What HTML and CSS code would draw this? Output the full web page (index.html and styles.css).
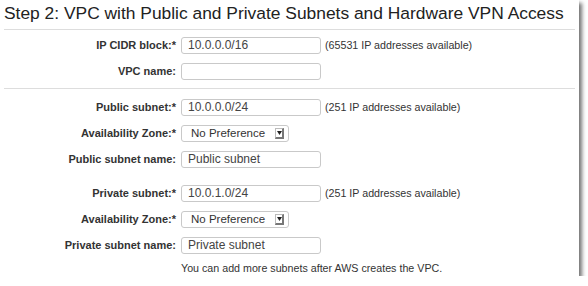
FILE: index.html
```html
<!DOCTYPE html>
<html lang="en">
<head>
    <meta charset="UTF-8">
    <title>Step 2: VPC with Public and Private Subnets and Hardware VPN Access</title>
    <link rel="stylesheet" href="styles.css">
</head>
<body>
    <div class="panel">
        <h1>Step 2: VPC with Public and Private Subnets and Hardware VPN Access</h1>

        <div class="section">
            <div class="row">
                <label>IP CIDR block:*</label>
                <div class="input">10.0.0.0/16</div>
                <span class="hint">(65531 IP addresses available)</span>
            </div>
            <div class="row">
                <label>VPC name:</label>
                <div class="input"></div>
            </div>
        </div>

        <div class="section">
            <div class="row">
                <label>Public subnet:*</label>
                <div class="input">10.0.0.0/24</div>
                <span class="hint">(251 IP addresses available)</span>
            </div>
            <div class="row">
                <label>Availability Zone:*</label>
                <div class="select">
                    <span>No Preference</span>
                    <span class="arrow"><svg width="5" height="4" viewBox="0 0 5 4"><path d="M0 0H5L2.5 4Z" fill="#222"/></svg></span>
                </div>
            </div>
            <div class="row">
                <label>Public subnet name:</label>
                <div class="input">Public subnet</div>
            </div>

            <div class="row spaced">
                <label>Private subnet:*</label>
                <div class="input">10.0.1.0/24</div>
                <span class="hint">(251 IP addresses available)</span>
            </div>
            <div class="row">
                <label>Availability Zone:*</label>
                <div class="select">
                    <span>No Preference</span>
                    <span class="arrow"><svg width="5" height="4" viewBox="0 0 5 4"><path d="M0 0H5L2.5 4Z" fill="#222"/></svg></span>
                </div>
            </div>
            <div class="row">
                <label>Private subnet name:</label>
                <div class="input">Private subnet</div>
            </div>
            <div class="note">You can add more subnets after AWS creates the VPC.</div>
        </div>
    </div>
</body>
</html>
```

FILE: styles.css
```css
body {
    margin: 0;
    background: #fff;
    font-family: "Liberation Sans", Arial, sans-serif;
    color: #333;
}
.panel {
    width: 579px;
    height: 276px;
    background: #fff;
    box-shadow: 3px 3px 4px rgba(0, 0, 0, 0.55);
    box-sizing: border-box;
    padding: 0 4px;
}
h1 {
    margin: 0;
    height: 29px;
    font-size: 17.4px;
    font-weight: normal;
    line-height: 27px;
    white-space: nowrap;
    color: #222;
    border-bottom: 1px solid #ddd;
}
.section {
    padding: 2px 0 4px;
    border-bottom: 1px solid #ddd;
}
.section:last-child {
    border-bottom: none;
    padding-top: 5px;
}
.row {
    display: flex;
    align-items: center;
    height: 26px;
}
.row.spaced {
    margin-top: 8px;
}
label {
    width: 172px;
    text-align: right;
    font-size: 11px;
    font-weight: bold;
    color: #333;
    margin-right: 5px;
}
.input {
    width: 140px;
    height: 17px;
    box-sizing: border-box;
    border: 1px solid #c9c9c9;
    border-radius: 3px;
    padding-left: 6px;
    font-size: 12px;
    line-height: 15px;
    color: #444;
}
.hint {
    margin-left: 4px;
    font-size: 10.7px;
    color: #333;
}
.select {
    width: 108px;
    height: 17px;
    box-sizing: border-box;
    border: 1px solid #c9c9c9;
    border-radius: 3px;
    display: flex;
    align-items: center;
    justify-content: space-between;
    padding: 0 4px 0 9px;
    font-size: 11.5px;
    color: #333;
}
.arrow {
    width: 9px;
    height: 11px;
    box-sizing: border-box;
    border: 1px solid #bbb;
    border-right: 2px solid #777;
    border-bottom: 2px solid #777;
    display: flex;
    align-items: center;
    justify-content: center;
}
.note {
    padding-left: 177px;
    font-size: 10.7px;
    margin-top: 4px;
    color: #333;
}
```
